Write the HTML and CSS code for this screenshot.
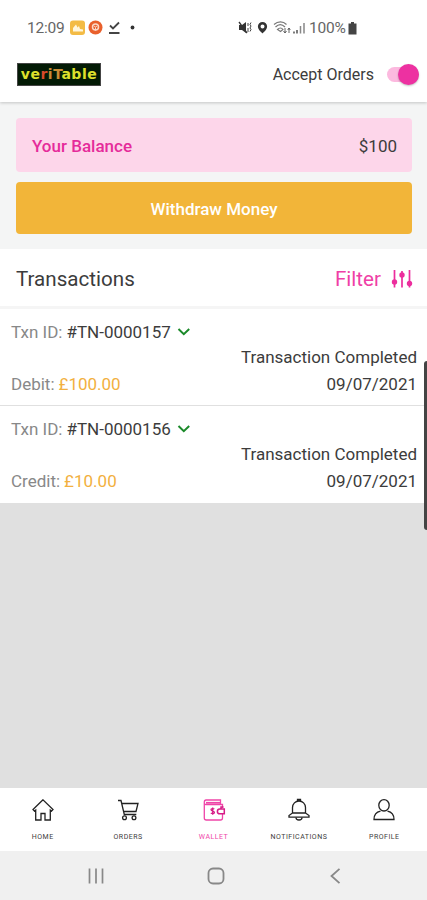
FILE: index.html
```html
<!DOCTYPE html>
<html lang="en">
<head>
    <meta charset="UTF-8">
    <meta name="viewport" content="width=device-width, initial-scale=1.0">
    <title>Wallet</title>
    <link rel="stylesheet" href="styles.css">
</head>
<body>
    <div class="status-bar">
        <span class="clock">12:09</span>
        <svg class="status-left" width="72" height="16" viewBox="0 0 72 16">
            <rect x="0" y="0.500" width="15" height="14.500" rx="3" fill="#f3bb45"/>
            <path d="M3 11.500V8l3-3.500 1.500 3L9 6l1 3 3 .5v2z" fill="#fff6dc"/>
            <circle cx="25.500" cy="7.500" r="7" fill="#e9602c"/>
            <circle cx="25.500" cy="7" r="3" fill="none" stroke="#fbd9c9" stroke-width="1.500"/>
            <path d="M24 6l1.500 1L27 6M25.500 7.500v3" fill="none" stroke="#fbd9c9"/>
            <path d="M40 5.500l3 3 6-6M39 13h10.500" fill="none" stroke="#444" stroke-width="1.800"/>
            <circle cx="62.500" cy="7.500" r="1.900" fill="#333"/>
        </svg>
        <svg class="status-right" width="68" height="16" viewBox="0 0 68 16">
            <path d="M1 5h3l4-3v11l-4-3H1z" fill="#333"/>
            <path d="M1 2l8 11" stroke="#333" stroke-width="1.300"/>
            <path d="M10 3v3M13 2.500l-1 2 1 1.500-1 2 1 1.500-1 2M10 8v4" fill="none" stroke="#444"/>
            <path d="M24.500 2a4.600 4.600 0 0 0-4.600 4.600c0 3.400 4.600 6.900 4.600 6.900s4.600-3.500 4.600-6.900A4.600 4.600 0 0 0 24.500 2zm0 2.600a2 2 0 1 1 0 4 2 2 0 0 1 0-4z" fill="#333" fill-rule="evenodd"/>
            <path d="M36 4.500c4-3.500 9-3.500 12.500 0M37.500 7c3-3 6.500-3 9.500 0M39.500 9.500c2-2 4-2 5.500 0l-2.500 2z" fill="none" stroke="#777" stroke-width="1.200"/>
            <path d="M47 8v5M45.500 11l1.500 2 1.500-2M51 13V8M49.700 10L51 8l1.300 2" fill="none" stroke="#555" stroke-width=".9"/>
            <path d="M56 13.500v-2M59 13.500V10" stroke="#666" stroke-width="1.700"/>
            <path d="M62.500 13.500V6M66 13.500V3" stroke="#888" stroke-width="1.500"/>
        </svg>
        <span class="percent">100%</span>
        <svg class="battery" width="9" height="13" viewBox="0 0 9 13">
            <path d="M3 0h3v1.500h2.500V12.500H.5V1.500H3z" fill="#444"/>
        </svg>
    </div>

    <header class="app-header">
        <div class="logo"><span>ve</span><span class="logo-r">r</span><span class="logo-mid">iT</span><span>able</span></div>
        <div class="accept">
            <span class="accept-label">Accept Orders</span>
            <div class="toggle"><div class="knob"></div></div>
        </div>
    </header>

    <section class="balance-section">
        <div class="balance">
            <span class="balance-label">Your Balance</span>
            <span class="balance-value">$100</span>
        </div>
        <div class="withdraw">Withdraw Money</div>
    </section>

    <div class="list-header">
        <span class="list-title">Transactions</span>
        <span class="filter">Filter</span>
        <svg width="22" height="20" viewBox="0 0 22 20">
            <g stroke="#ec2d9d" stroke-width="1.700" fill="none">
                <path d="M3.500 1v17.500M11 2v16.500M18.500 1v17.500"/>
            </g>
            <g fill="#ec2d9d">
                <circle cx="3.500" cy="13" r="2.700"/>
                <circle cx="11" cy="6" r="2.700"/>
                <circle cx="18.500" cy="14.500" r="2.700"/>
            </g>
        </svg>
    </div>

    <div class="transactions">
        <div class="txn">
            <div class="txn-id">
                <span class="muted">Txn ID:</span>
                <span class="number">#TN-0000157</span>
                <svg width="14" height="10" viewBox="0 0 14 10"><path d="M1.500 2l5.300 5.200L12.200 2" fill="none" stroke="#1b8a2a" stroke-width="2"/></svg>
            </div>
            <div class="txn-status">Transaction Completed</div>
            <div class="txn-bottom">
                <span class="muted">Debit:</span>
                <span class="amount">£100.00</span>
                <span class="date">09/07/2021</span>
            </div>
        </div>
        <div class="txn">
            <div class="txn-id">
                <span class="muted">Txn ID:</span>
                <span class="number">#TN-0000156</span>
                <svg width="14" height="10" viewBox="0 0 14 10"><path d="M1.500 2l5.300 5.200L12.200 2" fill="none" stroke="#1b8a2a" stroke-width="2"/></svg>
            </div>
            <div class="txn-status">Transaction Completed</div>
            <div class="txn-bottom">
                <span class="muted">Credit:</span>
                <span class="amount">£10.00</span>
                <span class="date">09/07/2021</span>
            </div>
        </div>
    </div>

    <div class="edge-handle"></div>

    <nav class="tabs">
        <div class="tab">
            <svg width="24" height="24" viewBox="0 0 24 24" fill="none" stroke="#222" stroke-width="1.300">
                <path d="M12 1.800L2 11.500l1.500 1.600 1.200-1V22H10v-6.500h4V22h5.300v-9.900l1.200 1 1.500-1.600z"/>
            </svg>
            <span>HOME</span>
        </div>
        <div class="tab">
            <svg width="24" height="24" viewBox="0 0 24 24" fill="none" stroke="#222" stroke-width="1.300">
                <path d="M2 2.500h3L8.300 16.500h12M5.800 5.500H22L20 13.500H7.500"/>
                <circle cx="8.500" cy="19.800" r="1.900"/>
                <circle cx="18" cy="19.800" r="1.900"/>
            </svg>
            <span>ORDERS</span>
        </div>
        <div class="tab active">
            <svg width="24" height="24" viewBox="0 0 24 24" fill="none" stroke="#ef45a8" stroke-width="1.300">
                <path d="M20.500 10V6.500H3.500C1.800 6.500 1.800 2 4 2h14.500v4M2.300 4.500V20a2 2 0 0 0 2 2h14.200a2 2 0 0 0 2-2v-4"/>
                <path d="M4 4.800h14.500" stroke-width="1.800"/>
                <path d="M22.300 11h-4.500a2.300 2.300 0 0 0 0 4.800h4.500zM19 10.500V9h2.500" stroke="#d61b86" stroke-width="1.500"/>
                <path d="M12.300 11.200c-.8-1-3.300-.9-3.300.6 0 1.600 3.400.9 3.400 2.600 0 1.500-2.600 1.600-3.500.5M10.700 9.500v7.300" stroke="#d61b86"/>
            </svg>
            <span>WALLET</span>
        </div>
        <div class="tab">
            <svg width="24" height="24" viewBox="0 0 24 24" fill="none" stroke="#222" stroke-width="1.300">
                <path d="M5.500 15V9.500a6.500 6.500 0 0 1 13 0V15l3.500 2.500v1.700H2v-1.700zM5.500 15h13M10.500 3V1.500h3V3"/>
                <path d="M9 19.500a3 2.500 0 0 0 6 0"/>
            </svg>
            <span>NOTIFICATIONS</span>
        </div>
        <div class="tab">
            <svg width="24" height="24" viewBox="0 0 24 24" fill="none" stroke="#222" stroke-width="1.300">
                <ellipse cx="12" cy="7.300" rx="5.200" ry="5.700"/>
                <path d="M8.500 13.200C4.500 14 2 16.500 2 21.500h20c0-5-2.500-7.500-6.500-8.300"/>
            </svg>
            <span>PROFILE</span>
        </div>
    </nav>

    <div class="system-nav">
        <svg width="20" height="18" viewBox="0 0 20 18"><path d="M3.500 1.500v15M10 1.500v15M16.500 1.500v15" stroke="#888" stroke-width="1.700"/></svg>
        <svg width="20" height="20" viewBox="0 0 20 20"><rect x="2.500" y="2.500" width="15" height="15" rx="4.500" fill="none" stroke="#888" stroke-width="1.800"/></svg>
        <svg width="20" height="18" viewBox="0 0 20 18"><path d="M13.500 1.800L5.500 9l8 7.200" fill="none" stroke="#888" stroke-width="1.800"/></svg>
    </div>
</body>
</html>
```
FILE: styles.css
```css
* {
    box-sizing: border-box;
}

body {
    display: flex;
    flex-direction: column;
    position: relative;
    height: 900px;
    margin: 0;
    overflow: hidden;
    background-color: #e0e0e0;
    font-family: Roboto, Arial, sans-serif;
    font-size: 17px;
    color: #3c3c3c;
    white-space: nowrap;
}

.status-bar {
    display: flex;
    align-items: center;
    height: 46px;
    padding: 10px 0 0 27px;
    background-color: #fff;
    color: #666;
    font-size: 15.5px;
    letter-spacing: -0.2px;
    z-index: 2;
}

.clock {
    width: 43px;
}

.status-left {
    margin-right: 96px;
}

.percent {
    margin-left: 3px;
    width: 39px;
}

.app-header {
    display: flex;
    justify-content: space-between;
    align-items: center;
    height: 56px;
    padding: 0 8px 0 17px;
    background-color: #fff;
    box-shadow: 0 1px 3px rgba(0, 0, 0, 0.2);
    z-index: 1;
}

.logo {
    width: 84px;
    height: 23px;
    border: 1px solid #444;
    background-color: #031a05;
    color: #dde02c;
    font-family: "DejaVu Sans", sans-serif;
    font-size: 14px;
    font-weight: bold;
    line-height: 21px;
    text-align: center;
    letter-spacing: 0.5px;
}

.logo-r {
    color: #d8492b;
}

.logo-mid {
    color: #c98b35;
}

.accept {
    display: flex;
    align-items: center;
    font-size: 16px;
}

.accept-label {
    margin-right: 13px;
}

.toggle {
    width: 32px;
    height: 15px;
    border-radius: 8px;
    background-color: #fcb9df;
}

.knob {
    width: 21px;
    height: 21px;
    margin: -3px 0 0 11px;
    border-radius: 50%;
    background-color: #ed31a1;
    box-shadow: 0 1px 2px rgba(0, 0, 0, 0.25);
}

.balance-section {
    height: 147px;
    padding: 16px 15px 0 16px;
    background-color: #f4f5f5;
}

.balance {
    display: flex;
    justify-content: space-between;
    align-items: center;
    height: 54px;
    padding: 2px 15px 0 16px;
    border-radius: 4px;
    background-color: #fdd6ea;
}

.balance-label {
    color: #e52b9a;
    font-weight: 500;
}

.withdraw {
    height: 52px;
    margin-top: 10px;
    border-radius: 4px;
    background-color: #f2b539;
    color: #fff;
    font-weight: 500;
    line-height: 54px;
    text-align: center;
}

.list-header {
    display: flex;
    align-items: center;
    height: 60px;
    padding: 2px 14px 0 16px;
    border-bottom: 3px solid #f5f5f5;
    background-color: #fff;
    font-size: 20.6px;
}

.filter {
    margin-left: auto;
    margin-right: 10px;
    color: #ef3fa6;
}

.txn {
    height: 97px;
    padding: 11px 10px 0 11px;
    background-color: #fff;
}

.txn + .txn {
    padding-top: 10px;
    border-top: 1px solid #e0e0e0;
    height: 98px;
    margin-top: -1px;
}

.txn + .txn .txn-id {
    height: 25px;
    padding-top: 1px;
}

.txn-id,
.txn-bottom {
    display: flex;
    align-items: center;
    height: 24px;
}

.txn-id svg {
    margin-left: 6px;
}

.muted {
    margin-right: 4px;
    color: #888;
}

.txn-status {
    height: 25px;
    line-height: 26px;
    text-align: right;
}

.txn-bottom {
    height: 30px;
}

.amount {
    color: #f2b040;
}

.date {
    margin-left: auto;
}

.edge-handle {
    position: absolute;
    right: 0;
    top: 361px;
    width: 3px;
    height: 169px;
    border-radius: 4px 0 0 4px;
    background-color: #444;
}

.tabs {
    display: flex;
    height: 63px;
    margin-top: auto;
    background-color: #fff;
}

.tab {
    display: flex;
    flex: 1;
    flex-direction: column;
    align-items: center;
    padding-top: 10px;
    font-size: 7px;
    letter-spacing: 0.5px;
}

.tab span {
    margin-top: 11px;
}

.active {
    color: #ef45a8;
}

.system-nav {
    display: flex;
    justify-content: space-between;
    align-items: center;
    height: 49px;
    padding: 0 81px 0 86px;
    background-color: #f0f0f0;
}
```
